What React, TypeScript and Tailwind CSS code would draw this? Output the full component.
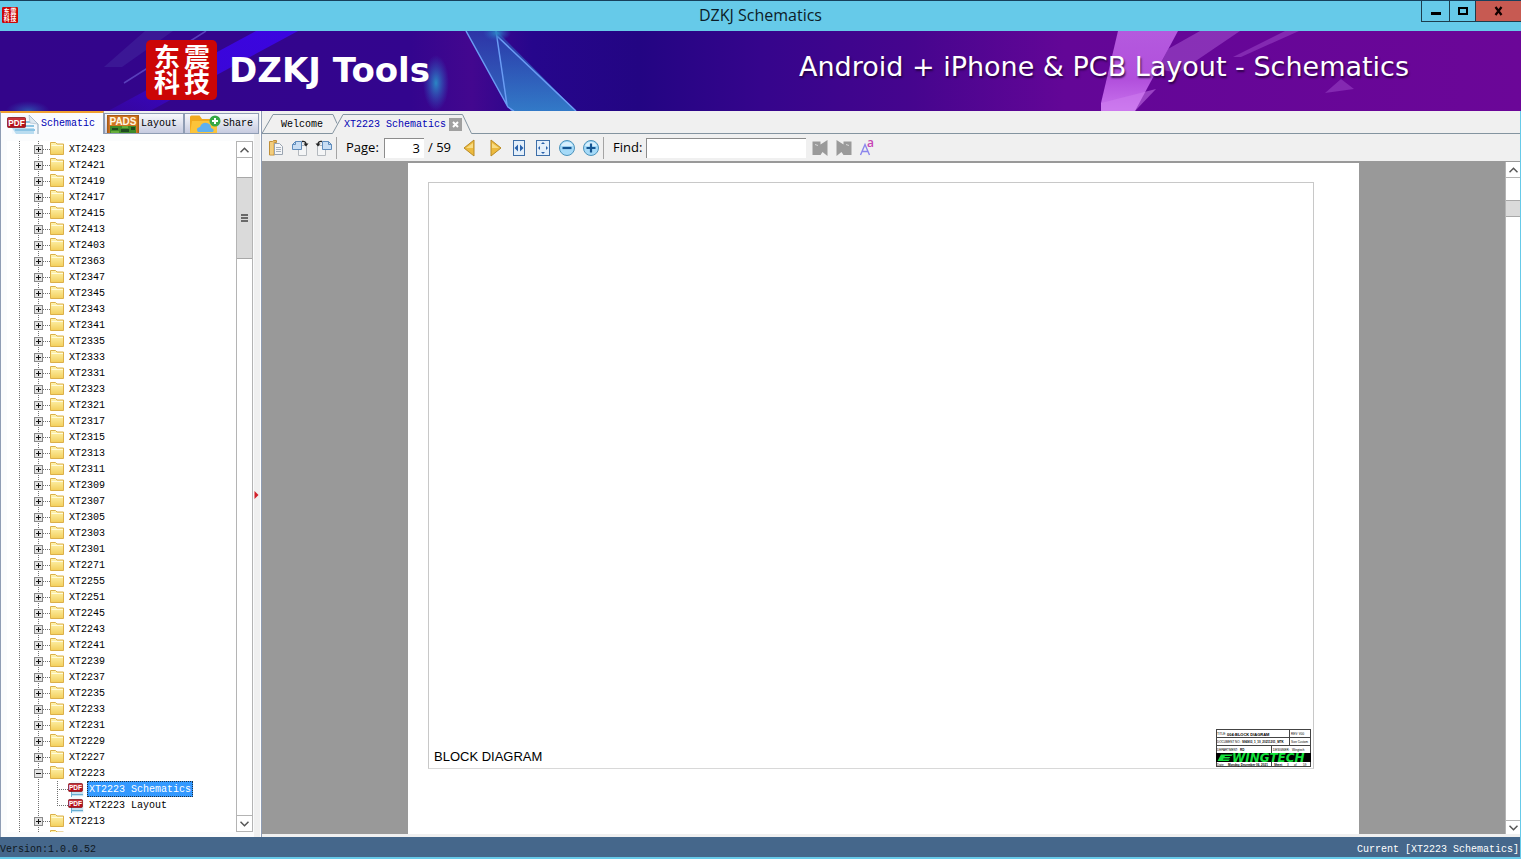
import { useState } from "react";
import type { ReactNode } from "react";

const MONO = "font-['Liberation_Mono','Noto_Sans_CJK_SC',monospace]";
const SANS = "font-['Open_Sans','Noto_Sans_CJK_SC',sans-serif]";
const WIDE = "font-['DejaVu_Sans','Noto_Sans_CJK_SC',sans-serif]";

const MODELS = [
  "XT2423", "XT2421", "XT2419", "XT2417", "XT2415", "XT2413", "XT2403", "XT2363",
  "XT2347", "XT2345", "XT2343", "XT2341", "XT2335", "XT2333", "XT2331", "XT2323",
  "XT2321", "XT2317", "XT2315", "XT2313", "XT2311", "XT2309", "XT2307", "XT2305",
  "XT2303", "XT2301", "XT2271", "XT2255", "XT2251", "XT2245", "XT2243", "XT2241",
  "XT2239", "XT2237", "XT2235", "XT2233", "XT2231", "XT2229", "XT2227",
];

function TitleBar() {
  return (
    <header className="flex h-[31px] shrink-0 items-start border-t border-[#17405c] bg-[#66cae9]">
      <div className="flex w-25 pt-1.5 pl-0.5">
        <SealLogo className="h-4 w-4" />
      </div>
      <h1 className={`flex-1 pt-1 text-center text-[16px] leading-5 text-[#0c1c28] ${SANS}`}>
        DZKJ Schematics
      </h1>
      <div className="flex h-[21px] border-b border-l border-[#1d3c4c]">
        <button aria-label="Minimize" className="flex w-7 items-center justify-center border-r border-[#1d3c4c]">
          <svg width="12" height="12" viewBox="0 0 12 12"><path d="M1 7h10v3H1z" fill="#000" /></svg>
        </button>
        <button aria-label="Maximize" className="flex w-[26px] items-center justify-center border-r border-[#1d3c4c]">
          <svg width="12" height="12" viewBox="0 0 12 12">
            <path d="M2 3h8v6H2z" fill="none" stroke="#000" strokeWidth="2" />
          </svg>
        </button>
        <button aria-label="Close" className="flex w-[45px] items-center justify-center bg-[#c75a52]">
          <svg width="12" height="12" viewBox="0 0 12 12">
            <path d="M2.500 2l6 8M8.500 2l-6 8" stroke="#100" strokeWidth="2.200" />
          </svg>
        </button>
      </div>
    </header>
  );
}

function SealLogo({ className }: { className: string }) {
  return (
    <svg className={`overflow-visible ${className}`} viewBox="0 0 71 60" preserveAspectRatio="none" aria-hidden="true">
      <rect width="71" height="60" rx="5" fill="#cc0606" />
      <g fill="#fff" fontFamily="Noto Sans CJK SC" fontWeight="700" fontSize="26" textAnchor="middle">
        <text x="21" y="27">东</text>
        <text x="51" y="27">震</text>
        <text x="21" y="52">科</text>
        <text x="51" y="52">技</text>
      </g>
    </svg>
  );
}

function Banner() {
  return (
    <div className="relative h-20 shrink-0 overflow-hidden bg-[#33058d]">
      <svg
        className="absolute inset-0 h-full w-full"
        viewBox="0 0 1521 80"
        preserveAspectRatio="none"
        aria-hidden="true"
      >
        <defs>
          <linearGradient id="sky">
            <stop offset="0" stopColor="#33058a" />
            <stop offset=".27" stopColor="#33058e" />
            <stop offset=".31" stopColor="#43078f" />
            <stop offset=".35" stopColor="#26068c" />
            <stop offset=".42" stopColor="#230583" />
            <stop offset=".5" stopColor="#35058c" />
            <stop offset=".6" stopColor="#46058e" />
            <stop offset=".7" stopColor="#630697" />
            <stop offset="1" stopColor="#6b0698" />
          </linearGradient>
          <linearGradient id="ray" x1="1" y1="0" x2="0" y2="1">
            <stop offset="0" stopColor="#3b05e0" />
            <stop offset=".55" stopColor="#3a06d8" />
            <stop offset="1" stopColor="#3a06c0" stopOpacity=".35" />
          </linearGradient>
          <linearGradient id="shard" x1="0" y1="0" x2="0" y2="1">
            <stop offset="0" stopColor="#2a3cab" />
            <stop offset="1" stopColor="#337fca" />
          </linearGradient>
          <linearGradient id="prism" x1="0" y1="0" x2="0" y2="1">
            <stop offset="0" stopColor="#b45ade" />
            <stop offset=".6" stopColor="#b14fdc" />
            <stop offset="1" stopColor="#ca75ee" />
          </linearGradient>
          <radialGradient id="glow">
            <stop offset="0" stopColor="#2b86c4" />
            <stop offset="1" stopColor="#2b60c4" stopOpacity="0" />
          </radialGradient>
        </defs>
        <rect width="1521" height="80" fill="url(#sky)" />
        <path d="M256 0h42L150 80h-42z" fill="url(#ray)" />
        <path d="M145 0h28L122 36h-18z" fill="#4a38a8" opacity=".35" />
        <path d="M206 0L124 52" stroke="#6a58d0" strokeWidth="1.500" opacity=".7" />
        <ellipse cx="436" cy="52" rx="13" ry="28" fill="url(#glow)" />
        <ellipse cx="28" cy="80" rx="22" ry="10" fill="url(#glow)" opacity=".6" />
        <path d="M466 0h31l79 80h-65z" fill="url(#shard)" opacity=".85" />
        <path d="M497 4l79 76h-62l-8-6z" fill="url(#shard)" opacity=".7" />
        <path d="M466 0l42 76 6 4M496 0l11 74M497 5l79 75" fill="none" stroke="#6a9cf4" strokeWidth="1.500" />
        <ellipse cx="497" cy="2" rx="14" ry="8" fill="url(#glow)" />
        <path d="M1118 0h60l-43 80h-34v-8z" fill="url(#prism)" />
        <path d="M1101 72l55-14-21 22h-34z" fill="#cf80f0" opacity=".5" />
        <path d="M1200 0h40l-62 42-20-4 10-20z" fill="#a04ccc" opacity=".6" />
        <path d="M1285 0h14l-58 26h-8z" fill="#a04ccc" opacity=".5" />
        <path d="M1341 48l13 10-29 4z" fill="#a04ccc" opacity=".5" />
      </svg>
      <div className="relative flex h-full items-start justify-between pt-[9px] pr-[112px] pl-[146px] text-white">
        <div className="flex items-center gap-3">
          <SealLogo className="h-15 w-[71px]" />
          <p className={`text-[34px] leading-[56px] font-bold whitespace-nowrap ${WIDE}`}>DZKJ Tools</p>
        </div>
        <p
          className={`text-[27px] leading-[54px] whitespace-nowrap [text-shadow:1px_2px_2px_rgba(30,0,50,0.8)] ${WIDE}`}
        >
          Android + iPhone &amp; PCB Layout - Schematics
        </p>
      </div>
    </div>
  );
}

function PdfBadge({ x, y, w, h }: { x: number; y: number; w: number; h: number }) {
  return (
    <g>
      <rect x={x} y={y} width={w} height={h} rx="1" fill="#b5101c" stroke="#7d0b13" strokeWidth=".7" />
      <rect x={x + 0.5} y={y + 0.5} width={w - 1} height={h / 2 - 0.5} fill="#c9323a" />
      <text
        x={x + w / 2}
        y={y + h - h * 0.2}
        fontFamily="Liberation Sans"
        fontWeight="700"
        fontSize={h * 0.82}
        fill="#fff"
        textAnchor="middle"
      >
        PDF
      </text>
    </g>
  );
}

function PdfTabIcon() {
  return (
    <svg width="33" height="20" viewBox="0 0 33 20" aria-hidden="true">
      <path d="M5 1h17l9 9v10H5z" fill="#f4f8fc" />
      <path d="M5 14h22v6H9z" fill="#b9dcf0" />
      <path d="M18 8h8M18 12h9M8 16h20" stroke="#8cc4e4" strokeWidth="2" />
      <path d="M22 1l9 9v10" fill="none" stroke="#8aa4b8" />
      <path d="M22 1l1 8 8 1z" fill="#dde8f0" stroke="#a4b8c8" strokeWidth=".6" />
      <PdfBadge x={0.5} y={3.5} w={18} h={10} />
    </svg>
  );
}

function PadsIcon() {
  return (
    <svg width="32" height="18" viewBox="0 0 32 18" aria-hidden="true">
      <rect width="32" height="18" fill="#a85a14" />
      <rect x="1.500" y="1" width="29" height="17" fill="#cf7420" />
      <text x="16" y="10" fontFamily="Liberation Sans" fontWeight="700" fontSize="10" fill="#fff6e0" textAnchor="middle">
        PADS
      </text>
      <path d="M3 11h26v7H3z" fill="#3f8a28" />
      <path d="M5 13h6v2H5zM14 14h8v3h-8zM24 12h4v3h-4z" fill="#1f4a20" />
      <path d="M4 17h8M15 12h6" stroke="#8ed04c" />
    </svg>
  );
}

function ShareIcon() {
  return (
    <svg width="32" height="18" viewBox="0 0 32 18" aria-hidden="true">
      <path d="M1 18V2q0-1.500 1.500-1.500h8L13 4h14v14z" fill="#f0a91e" />
      <path d="M1 18L3 6h25v12z" fill="#fbc43a" />
      <path d="M9 17q-3-4 2-5 2-5 7-4 4 1 4 5 4 1 2 4z" fill="#5fb0ee" />
      <circle cx="26" cy="6" r="5.500" fill="#35a845" />
      <path d="M26 3v6M23 6h6" stroke="#fff" strokeWidth="2" />
    </svg>
  );
}

function SideTabs() {
  return (
    <div role="tablist" className="flex h-[23px] shrink-0 items-end pr-px">
      <button
        role="tab"
        aria-selected="true"
        className="flex h-[23px] w-26 items-center gap-px border-t-2 border-r border-l border-t-[#f0a030] border-r-[#8f9db4] border-l-[#8f9db4] bg-[#fbfcfe] pl-1.5 text-[#0000b4]"
      >
        <PdfTabIcon />
        Schematic
      </button>
      <button
        role="tab"
        aria-selected="false"
        className="flex h-[21px] w-20 items-center gap-0.5 border border-[#8f9db4] bg-linear-to-b from-[#f8f9fc] to-[#c6cbe0] pl-0.5"
      >
        <PadsIcon />
        Layout
      </button>
      <button
        role="tab"
        aria-selected="false"
        className="flex h-[21px] w-[75px] items-center gap-0.5 border border-[#8f9db4] bg-linear-to-b from-[#f8f9fc] to-[#c6cbe0] pl-1"
      >
        <ShareIcon />
        Share
      </button>
      <div className="h-px flex-1 bg-[#8f9db4]" />
    </div>
  );
}

function Folder() {
  return (
    <svg width="15" height="16" viewBox="0 0 15 16" className="shrink-0" aria-hidden="true">
      <defs>
        <linearGradient id="folder" x1="0" y1="0" x2="0" y2="1">
          <stop offset="0" stopColor="#fff6b4" />
          <stop offset="1" stopColor="#f3cf5c" />
        </linearGradient>
      </defs>
      <path d="M.5 13.500v-12h5l1.500 1.500h6.500v10.500z" fill="url(#folder)" stroke="#dcb04a" />
      <path d="M1.500 4.500h11.500" stroke="#fffbdc" />
    </svg>
  );
}

function ModelRow({ name, open = false }: { name: string; open?: boolean }) {
  return (
    <li className="flex h-4 items-center">
      <button aria-label={`${open ? "Collapse" : "Expand"} ${name}`} className="shrink-0">
        <svg width="31" height="16" viewBox="0 0 31 16" shapeRendering="crispEdges">
          <path d="M.5 0v16M19.500 0v16M24 8.500h7" stroke="#707070" strokeDasharray="1 1" fill="none" />
          <rect x="15.500" y="4.500" width="8" height="8" fill="#e4e4e4" stroke="#8a8a8a" />
          <path d={open ? "M17 8.500h5" : "M17 8.500h5M19.500 6v5"} stroke="#111" />
        </svg>
      </button>
      <Folder />
      <span className="ml-1 pt-0.5 leading-4">{name}</span>
    </li>
  );
}

function FileRow({
  name, last = false, selected, onSelect,
}: { name: string; last?: boolean; selected: boolean; onSelect: () => void }) {
  return (
    <li className="flex h-4 items-center">
      <svg width="49" height="16" viewBox="0 0 49 16" className="shrink-0" shapeRendering="crispEdges" aria-hidden="true">
        <path
          d={`M.5 0v16M19.500 0v16M38.500 0v${last ? 8 : 16}M38 8.500h11`}
          stroke="#707070"
          strokeDasharray="1 1"
          fill="none"
        />
      </svg>
      <svg width="17" height="16" viewBox="0 0 17 16" className="shrink-0" aria-hidden="true">
        <path d="M3 0h9l4 4v12H3z" fill="#f2f8fc" />
        <path d="M4 11h11v4H4z" fill="#c4e2f2" />
        <path d="M3.500 10v6M4 13.500h11" stroke="#6aaed2" />
        <PdfBadge x={0.5} y={2.5} w={14} h={8} />
      </svg>
      <button
        onClick={onSelect}
        className={
          selected
            ? "ml-0.5 h-4 border border-dotted border-[#203040] bg-[#3399ff] pt-0.5 pr-px pl-px leading-3 text-white"
            : "ml-0.5 h-4 border border-transparent pt-0.5 pr-px pl-px leading-3"
        }
      >
        {name}
      </button>
    </li>
  );
}

function Chevron({ down = false }: { down?: boolean }) {
  return (
    <svg width="9" height="6" viewBox="0 0 9 6" aria-hidden="true">
      <path d={down ? "M.5 .8L4.500 4.800 8.500 .8" : "M.5 5.200L4.500 1.200 8.500 5.200"} fill="none" stroke="#555" strokeWidth="1.500" />
    </svg>
  );
}

function SidePanel() {
  const [file, setFile] = useState("XT2223 Schematics");
  return (
    <aside className="flex w-[261px] shrink-0 flex-col border-r border-white bg-[#f0f0f0]">
      <SideTabs />
      <div className="flex min-h-0 flex-1">
        <div className="flex min-h-0 flex-1 border-l border-[#8f9db4] bg-[#fbfcfd] pt-[7px] pr-px pb-[5px] pl-1.5">
          <div className="min-w-0 flex-1 overflow-hidden bg-white pl-3">
            <ul>
              {MODELS.map((m) => (
                <ModelRow key={m} name={m} />
              ))}
              <ModelRow name="XT2223" open />
              <FileRow
                name="XT2223 Schematics"
                selected={file === "XT2223 Schematics"}
                onSelect={() => setFile("XT2223 Schematics")}
              />
              <FileRow
                name="XT2223 Layout"
                last
                selected={file === "XT2223 Layout"}
                onSelect={() => setFile("XT2223 Layout")}
              />
              <ModelRow name="XT2213" />
              <ModelRow name="" />
            </ul>
          </div>
          <div className="flex w-[17px] flex-col border border-[#b4b4b4] bg-white">
            <button aria-label="Scroll up" className="flex h-4 items-center justify-center border-b border-[#b4b4b4]">
              <Chevron />
            </button>
            <div className="flex-1 pt-[19px]">
              <div className="flex h-[82px] items-center justify-center border-y border-[#a8a8a8] bg-[#dadada]">
                <svg width="7" height="9" viewBox="0 0 7 9" aria-hidden="true">
                  <path d="M0 1h7M0 4h7M0 7h7" stroke="#444" strokeWidth="1.500" />
                </svg>
              </div>
            </div>
            <button aria-label="Scroll down" className="flex h-4 items-center justify-center border-t border-[#b4b4b4]">
              <Chevron down />
            </button>
          </div>
        </div>
        <button aria-label="Collapse panel" className="flex w-1.5 items-center pt-[18px]">
          <svg width="5" height="8" viewBox="0 0 5 8" aria-hidden="true">
            <path d="M.5 0L4.500 4 .5 8z" fill="#d3202a" />
          </svg>
        </button>
      </div>
    </aside>
  );
}

function DocTabs() {
  return (
    <div role="tablist" className="flex h-[23px] shrink-0 items-end">
      <button role="tab" aria-selected="false" className="flex h-5 items-stretch">
        <svg width="12" height="20" viewBox="0 0 12 20" aria-hidden="true">
          <path d="M0 19.500L11 .5h1M0 19.500h12" fill="none" stroke="#8494a0" />
        </svg>
        <span className="border-t border-b border-[#8494a0] px-[7px] leading-[19px]">Welcome</span>
      </button>
      <button role="tab" aria-selected="true" className="flex h-5 items-stretch text-[#0000b4]">
        <svg width="14" height="20" viewBox="0 0 14 20" aria-hidden="true">
          <path d="M0 19.500h2.500L13 .5h1M0 .5h3l4 9" fill="none" stroke="#8494a0" />
        </svg>
        <span className="flex items-center gap-[3px] border-t border-[#8494a0] leading-[19px]">
          XT2223 Schematics
          <svg width="13" height="13" viewBox="0 0 13 13" aria-hidden="true">
            <rect width="13" height="13" fill="#a0a0a0" />
            <path d="M4 4l5 5M9 4L4 9" stroke="#fff" strokeWidth="2" />
          </svg>
        </span>
        <svg width="10" height="20" viewBox="0 0 10 20" aria-hidden="true">
          <path d="M0 .5h.5L9.500 19.500h.5" fill="none" stroke="#8494a0" />
        </svg>
      </button>
      <div className="h-px flex-1 bg-[#8494a0]" />
    </div>
  );
}

function Tool({ label, children }: { label: string; children: ReactNode }) {
  return (
    <button aria-label={label} title={label} className="flex h-6 w-6 shrink-0 items-center justify-center">
      <svg width="18" height="18" viewBox="0 0 18 18" className="overflow-visible" aria-hidden="true">
        {children}
      </svg>
    </button>
  );
}

function RotatePages() {
  return (
    <>
      <path d="M7.500 8.500h3v-2h5v10h-8z" fill="#f4f5f6" stroke="#b4b9be" />
      <path d="M4.500 2.500h6v8H1.500v-5z" fill="#c9def4" stroke="#5f8cbc" />
      <path d="M1.500 5.500h3v-3" fill="none" stroke="#5f8cbc" />
      <path d="M11 2.500q3.500-.8 4 2.500" fill="none" stroke="#222" strokeWidth="1.400" />
      <path d="M12.500 4.500h5l-2.500 3z" fill="#222" />
    </>
  );
}

function Toolbar() {
  const [page, setPage] = useState("3");
  return (
    <div className={`flex h-7 shrink-0 items-center border-b border-[#999] bg-[#f0f0f0] pl-0.5 text-[13px] text-black ${SANS}`}>
      <Tool label="Copy page">
        <path d="M2.500 2.500h3l1-1h3v2h-2v12.500h-5z" fill="#e9b95c" stroke="#c08f38" />
        <path d="M3 3h3v12.500H3z" fill="#f2cd7e" />
        <path d="M7.500 4.500h5l3 3v8h-8z" fill="#f5f6f8" stroke="#9aa4b0" />
        <path d="M9 8.500h5M9 10.500h5M9 12.500h5" stroke="#a8b2be" />
      </Tool>
      <Tool label="Rotate right"><RotatePages /></Tool>
      <Tool label="Rotate left">
        <g transform="translate(18 0) scale(-1 1)"><RotatePages /></g>
      </Tool>
      <div className="h-[22px] w-px shrink-0 bg-[#a4a4a4]" />
      <label htmlFor="page" className="ml-[9px] w-[38px] shrink-0">Page:</label>
      <input
        id="page"
        value={page}
        onChange={(e) => setPage(e.target.value)}
        className="h-5 w-10 border-t border-l border-[#8c8c8c] bg-white pr-1 text-right outline-none"
      />
      <span className="ml-1 w-[29px] shrink-0 whitespace-nowrap">/ 59</span>
      <Tool label="Previous page">
        <path d="M14 1v16L4 9z" fill="#ecba3e" stroke="#b98a24" strokeLinejoin="round" />
        <path d="M13 4v5H6z" fill="#f8dc84" />
      </Tool>
      <div className="ml-0.5 flex">
        <Tool label="Next page">
          <path d="M5 1v16L15 9z" fill="#ecba3e" stroke="#b98a24" strokeLinejoin="round" />
          <path d="M6 4v5h7z" fill="#f8dc84" />
        </Tool>
        <Tool label="Fit width">
          <rect x="3.500" y="1.500" width="11" height="15" fill="#e4effa" stroke="#3d6ea8" />
          <path d="M8 5.500v7L4.500 9zM10 5.500v7L13.500 9z" fill="#2a62ac" />
        </Tool>
        <Tool label="Fit page">
          <rect x="2.500" y="1.500" width="13" height="15" fill="#e4effa" stroke="#3d6ea8" />
          <path d="M7 5h4L9 3zM7 13h4l-2 2zM6 7v4L4 9zM12 7v4l2-2z" fill="#2a62ac" />
        </Tool>
        <Tool label="Zoom out">
          <circle cx="9" cy="9" r="7.500" fill="#a5daf8" stroke="#4d93bb" />
          <path d="M3 7q1.500-4 6-4t6 4z" fill="#d8f0fd" />
          <path d="M4.500 9h9" stroke="#155591" strokeWidth="2.200" />
        </Tool>
        <Tool label="Zoom in">
          <circle cx="9" cy="9" r="7.500" fill="#a5daf8" stroke="#4d93bb" />
          <path d="M3 7q1.500-4 6-4t6 4z" fill="#d8f0fd" />
          <path d="M4.500 9h9M9 4.500v9" stroke="#155591" strokeWidth="2.200" />
        </Tool>
      </div>
      <div className="h-[22px] w-px shrink-0 bg-[#a4a4a4]" />
      <label htmlFor="find" className="ml-[9px] w-[33px] shrink-0">Find:</label>
      <input
        id="find"
        className="h-5 w-40 border-t border-l border-[#8c8c8c] bg-white px-1 outline-none"
      />
      <div className="ml-0.5 flex">
        <Tool label="Find previous">
          <path d="M1.500 2.500h8v3l7-4.500v16l-5-4-2 3h-8z" fill="#9a9a9a" />
          <path d="M4 5.500l3 1" stroke="#d8d8d8" />
        </Tool>
        <Tool label="Find next">
          <path d="M16.500 2.500h-8v3L1.500 1v16l5-4 2 3h8z" fill="#9a9a9a" />
          <path d="M11 5.500l3 1" stroke="#d8d8d8" />
        </Tool>
        <Tool label="Match case">
          <path d="M1.500 16L6 5.500l4.500 10.500M3.500 12.500h5.500" fill="none" stroke="#8c86ec" strokeWidth="1.400" />
          <text x="8" y="8" fontFamily="Open Sans" fontWeight="600" fontSize="12" fill="#c845b4">a</text>
        </Tool>
      </div>
    </div>
  );
}

function TitleBlock() {
  return (
    <svg width="95" height="38" viewBox="0 0 95 38" aria-label="Title block" role="img">
      <rect x=".5" y=".5" width="94" height="37" fill="#fff" stroke="#444" />
      <path d="M0 8.500h95M0 16.500h95M0 24.500h95M73.500 0v16.500M55.500 16.500v8M55.500 33v5" stroke="#444" />
      <rect x="0" y="24" width="95" height="9" fill="#000" />
      <g fontFamily="Liberation Sans" fill="#000">
        <g fontSize="3">
          <text x="1" y="6">TITLE:</text>
          <text x="75" y="6">REV: V00</text>
          <text x="1" y="14">DOCUMENT NO.:</text>
          <text x="75" y="14">Size Custom</text>
          <text x="1" y="22">DEPARTMENT:</text>
          <text x="24" y="22" fontWeight="700">RD</text>
          <text x="57" y="22">DESIGNER:</text>
          <text x="76" y="22">Wingtech</text>
          <text x="1" y="36.500">Date:</text>
          <text x="12" y="36.500" fontWeight="700">Monday, December 06, 2021</text>
          <text x="58" y="36.500" fontWeight="700">Sheet</text>
          <text x="71" y="36.500">3</text>
          <text x="78" y="36.500">of</text>
          <text x="87" y="36.500">59</text>
        </g>
        <text x="11" y="6.500" fontSize="4" fontWeight="700">004:BLOCK DIAGRAM</text>
        <text x="26" y="14" fontSize="3" fontWeight="700">S96903_1_10_20211201_MTK</text>
      </g>
      <path d="M5 25.500h12l-1.500 1.500H9l-.5 1h6L13 29.500H7.500L7 30.500h7l-1.500 1.500H1.500z" fill="#14e23c" />
      <text x="16" y="33" fontFamily="DejaVu Sans" fontWeight="700" fontStyle="italic" fontSize="12" fill="#14e23c">
        WINGTECH
      </text>
    </svg>
  );
}

function Viewer() {
  return (
    <div className="flex min-h-0 flex-1 bg-[#999]">
      <div className="flex min-w-0 flex-1 justify-center pt-px">
        <div className="flex w-[951px] flex-col bg-white px-[20px] pt-[19px] pb-[65px]">
          <section className="mr-[25px] flex flex-1 items-end justify-between border border-[#c8c8c8] border-b-[#d8d8d8] pr-0.5 pb-px pl-[5px]">
            <p className="pb-0.5 font-['Liberation_Sans',sans-serif] text-[13px] leading-4 text-black">BLOCK DIAGRAM</p>
            <TitleBlock />
          </section>
        </div>
      </div>
      <div className="flex w-[15px] flex-col border-l border-[#b4b4b4] bg-white">
        <button aria-label="Scroll page up" className="flex h-4 items-center justify-center border-b border-[#b4b4b4]">
          <Chevron />
        </button>
        <div className="flex-1 pt-[22px]">
          <div className="h-[17px] border-y border-[#a8a8a8] bg-[#dadada]" />
        </div>
        <button aria-label="Scroll page down" className="flex h-3.5 items-center justify-center border-t border-[#b4b4b4]">
          <Chevron down />
        </button>
      </div>
    </div>
  );
}

export default function App() {
  return (
    <div className={`flex h-screen flex-col overflow-hidden bg-[#66cae9] text-[10px] text-black ${MONO}`}>
      <TitleBar />
      <Banner />
      <main className="mr-px flex min-h-0 flex-1 bg-[#f0f0f0]">
        <SidePanel />
        <section className="flex min-w-0 flex-1 flex-col border-l border-[#8f9db4]">
          <DocTabs />
          <Toolbar />
          <Viewer />
          <div className="h-[3px] shrink-0 bg-[#f0f0f0]" />
        </section>
      </main>
      <footer className="mr-px mb-0.5 flex h-5 shrink-0 items-center justify-between bg-[#45678b] pt-1 pr-px">
        <span className="text-[#101820]">Version:1.0.0.52</span>
        <span className="text-white">Current [XT2223 Schematics]</span>
      </footer>
    </div>
  );
}
